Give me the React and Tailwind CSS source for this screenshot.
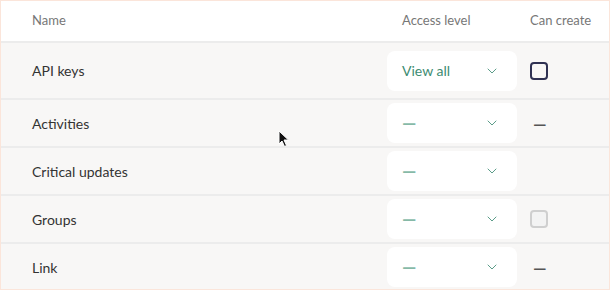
import { ChevronDown } from "lucide-react";

const rows = [
  { name: "API keys", level: "View all", create: "box", tall: true },
  { name: "Activities", level: null, create: "dash" },
  { name: "Critical updates", level: null, create: null },
  { name: "Groups", level: null, create: "disabled" },
  { name: "Link", level: null, create: "dash" },
];

function Select({ value }) {
  return (
    <div className="flex h-10 w-[130px] items-center justify-between rounded-lg bg-white pl-[15px] pr-[17px]">
      {value ? (
        <span className="text-[14px] text-[#3d8c72]">{value}</span>
      ) : (
        <span className="text-[18px] font-bold leading-none text-[#86b9a7]">—</span>
      )}
      <ChevronDown size={16} strokeWidth={1.4} className="text-[#4f9580]" />
    </div>
  );
}

function CanCreate({ kind }) {
  if (kind === "box")
    return <div className="h-[18px] w-[18px] rounded-[4px] border-2 border-[#2f3152]" />;
  if (kind === "disabled")
    return <div className="h-[18px] w-[18px] rounded-[4px] border-2 border-[#cfcfcf] bg-[#f3f3f3]" />;
  if (kind === "dash")
    return <span className="pl-[3px] text-[17px] font-bold leading-none text-[#555]">—</span>;
  return null;
}

export default function App() {
  return (
    <div
      className="relative h-[290px] w-[610px] overflow-hidden border border-[#fbe5da] bg-[#f8f7f6]"
      style={{ fontFamily: "Lato, 'Noto Sans', sans-serif" }}
    >
      <div className="flex h-[40px] items-center bg-white text-[13px] text-[#777]">
        <div className="flex-1 pl-[31px]">Name</div>
        <div className="w-[143px] pl-[15px]">Access level</div>
        <div className="w-[79px]">Can create</div>
      </div>
      {rows.map((r) => (
        <div
          key={r.name}
          className={`flex items-center border-t-2 border-[#ececec] ${r.tall ? "h-[57px]" : "h-[48px]"}`}
        >
          <div className="flex-1 pl-[31px] text-[14px] text-[#333]">{r.name}</div>
          <div className="w-[143px]">
            <Select value={r.level} />
          </div>
          <div className="flex w-[79px] items-center">
            <CanCreate kind={r.create} />
          </div>
        </div>
      ))}
      <svg className="absolute left-[277px] top-[129px]" width="12" height="18" viewBox="0 0 12 18">
        <path d="M1 1 L1 14 L4 11 L6.5 16.5 L8.5 15.5 L6 10 L10.5 10 Z" fill="#111" stroke="#fff" strokeWidth="1" />
      </svg>
    </div>
  );
}
